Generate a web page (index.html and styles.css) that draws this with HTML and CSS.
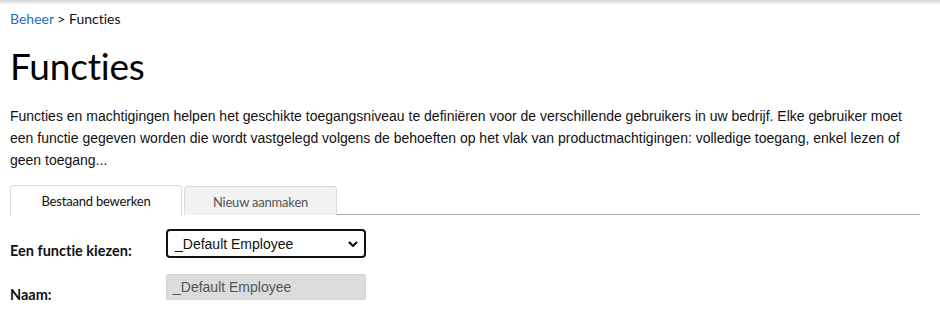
FILE: index.html
```html
<!DOCTYPE html>
<html lang="nl">
<head>
<meta charset="utf-8">
<title>Functies</title>
<link rel="stylesheet" href="styles.css">
</head>
<body>
<div class="topshadow"></div>
<main class="page">
  <nav class="crumbs"><a href="#">Beheer</a> &gt; Functies</nav>
  <h1 class="title">Functies</h1>
  <p class="intro">Functies en machtigingen helpen het geschikte toegangsniveau te definiëren voor de verschillende gebruikers in uw bedrijf. Elke gebruiker moet een functie gegeven worden die wordt vastgelegd volgens de behoeften op het vlak van productmachtigingen: volledige toegang, enkel lezen of geen toegang...</p>
  <div class="tabs">
    <div class="tab active">Bestaand bewerken</div>
    <div class="tab">Nieuw aanmaken</div>
    <div class="tabline"></div>
  </div>
  <div class="form">
    <div class="row">
      <label class="label">Een functie kiezen:</label>
      <div class="select">
        <span>_Default Employee</span>
        <svg class="chev" viewBox="0 0 10 6" width="10" height="6"><path d="M1 1 L5 5 L9 1" fill="none" stroke="#000" stroke-width="2"/></svg>
      </div>
    </div>
    <div class="row row2">
      <label class="label">Naam:</label>
      <div class="input">_Default Employee</div>
    </div>
  </div>
</main>
</body>
</html>
```

FILE: styles.css
```css
html, body {
  margin: 0;
  padding: 0;
  background: #fff;
}
body {
  font-family: "Liberation Sans", Arial, sans-serif;
  color: #111;
  font-variant-ligatures: none;
}
.topshadow {
  height: 5px;
  background: linear-gradient(#d4d4d4, #fff);
}
.page {
  padding: 0 20px 0 10px;
}
.crumbs {
  font-family: "Lato", "Open Sans", sans-serif;
  font-size: 14px;
  color: #111;
  margin-top: 6px;
  line-height: 16px;
}
.crumbs a {
  color: #1f6fc1;
  text-decoration: none;
}
.title {
  font-family: "Lato", "Open Sans", sans-serif;
  font-weight: 400;
  font-size: 37px;
  line-height: 44px;
  margin: 17px 0 17px;
  color: #000;
  letter-spacing: -0.2px;
}
.intro {
  font-size: 14px;
  line-height: 22px;
  margin: 0;
  color: #111;
  max-width: 895px;
}
.tabs {
  display: flex;
  align-items: flex-end;
  margin-top: 14px;
  height: 30px;
}
.tab {
  font-family: "Lato", "Open Sans", sans-serif;
  font-size: 13px;
  height: 28px;
  line-height: 30px;
  text-align: center;
  border: 1px solid #dadada;
  border-bottom: none;
  border-radius: 4px 4px 0 0;
  background: #f2f2f2;
  color: #555;
  width: 151px;
  margin-right: 2px;
  letter-spacing: -0.2px;
}
.tab.active {
  width: 170px;
  background: #fff;
  color: #111;
  height: 29px;
}
.tabline {
  flex: 1;
  border-bottom: 1px solid #a6a6a6;
  margin-left: -2px;
}
.form {
  padding-top: 14px;
}
.row {
  display: flex;
  align-items: flex-start;
}
.label {
  font-family: "Lato", "Open Sans", sans-serif;
  font-weight: 700;
  font-size: 14.5px;
  width: 156px;
  padding-top: 13px;
  color: #111;
}
.select {
  box-sizing: border-box;
  width: 200px;
  height: 29px;
  border: 2px solid #111;
  border-radius: 4px;
  display: flex;
  align-items: center;
  justify-content: space-between;
  padding: 0 6px 0 7px;
  font-size: 14px;
  color: #111;
}
.chev {
  display: block;
}
.row2 {
  margin-top: 15px;
}
.row2 .label {
  padding-top: 12px;
}
.input {
  box-sizing: border-box;
  width: 200px;
  height: 26px;
  background: #dcdcdc;
  border: 1px solid #d2d2d2;
  border-radius: 2px;
  font-size: 14px;
  line-height: 24px;
  padding-left: 6px;
  color: #555;
}
```
